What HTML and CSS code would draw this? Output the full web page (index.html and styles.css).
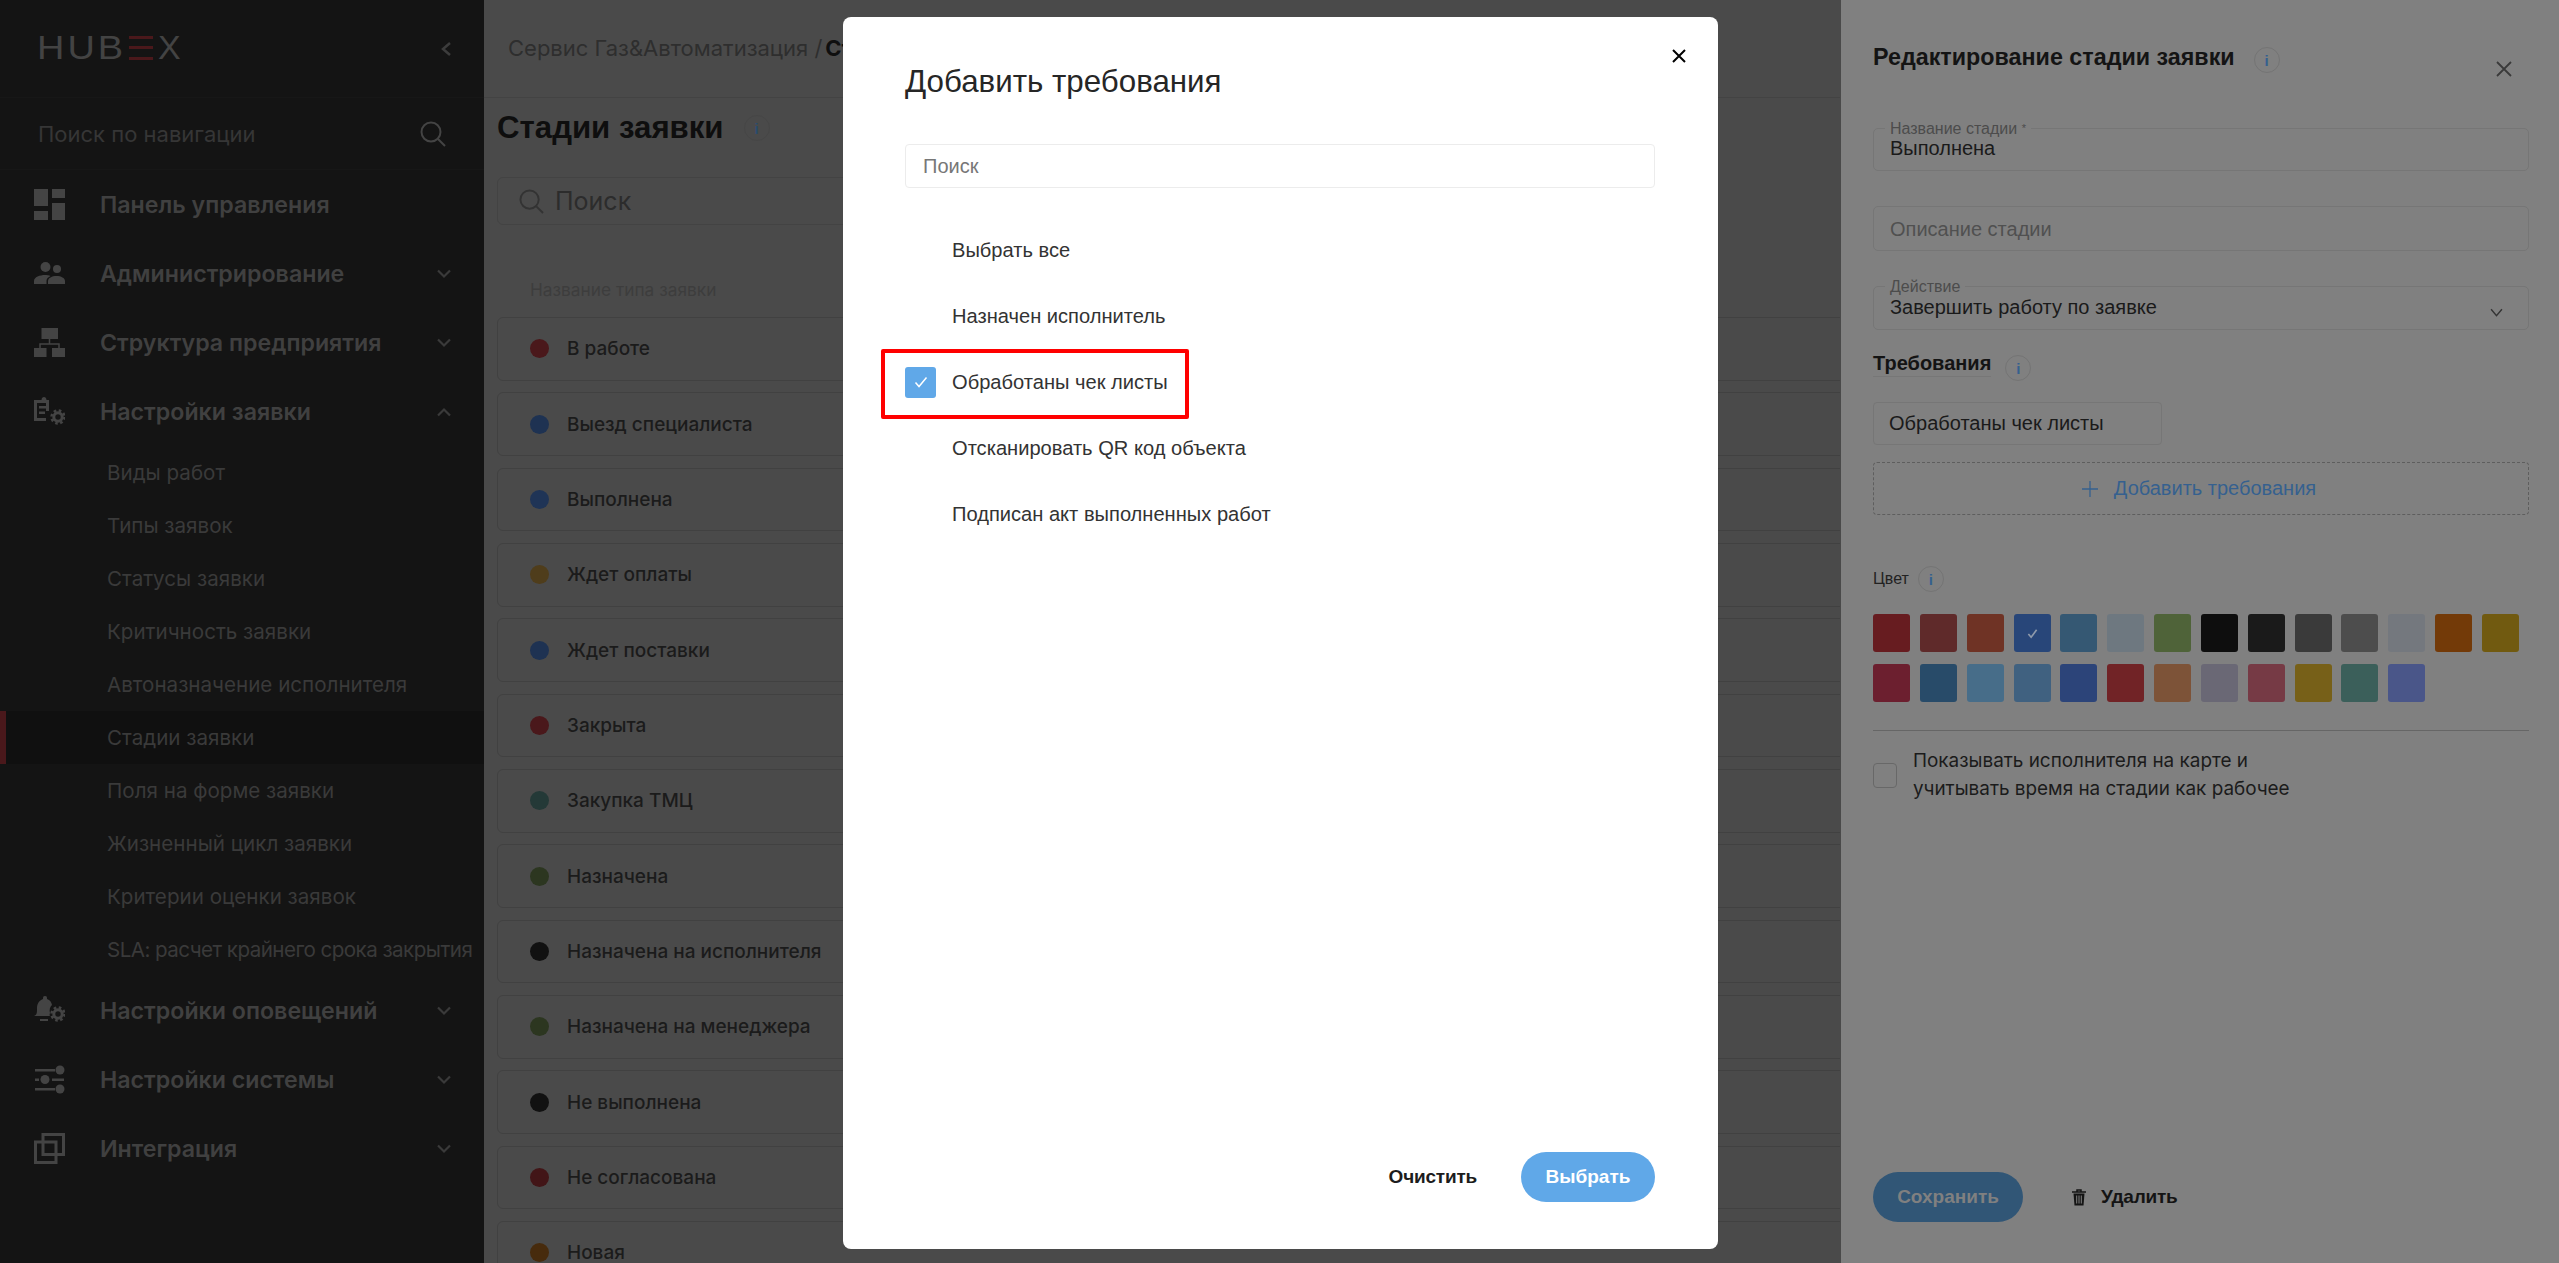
FILE: index.html
```html
<!DOCTYPE html>
<html lang="ru">
<head>
<meta charset="utf-8">
<title>Стадии заявки</title>
<link rel="stylesheet" href="styles.css">
</head>
<body>
<aside class="sidebar">
  <div class="brand">
    <div class="logo"><span class="logo-hub">HUB</span><i class="logo-e"><b></b><b></b><b></b></i><span class="logo-x">X</span></div>
    <svg class="collapse" viewBox="0 0 12 16"><polyline points="10,2 3,8 10,14"/></svg>
  </div>
  <div class="nav-search">
    <span>Поиск по навигации</span>
    <svg class="search-ico" viewBox="0 0 26 26"><circle cx="11" cy="11" r="9.5"/><line x1="18" y1="18" x2="25" y2="25"/></svg>
  </div>
  <nav class="nav">
    <div class="nav-item">
      <svg class="nav-ico" viewBox="0 0 31 31"><rect x="0" y="0" width="14" height="17"/><rect x="18" y="0" width="13" height="9"/><rect x="18" y="14" width="13" height="17"/><rect x="0" y="22" width="14" height="9"/></svg>
      <span>Панель управления</span>
    </div>
    <div class="nav-item">
      <svg class="nav-ico" viewBox="0 0 31 31"><circle cx="11.5" cy="9" r="5"/><circle cx="23" cy="11" r="4"/><path d="M0 26v-3c0-4 6-6 11-6 2 0 4 .4 5.5 1-3 1.5-4 3-4 5v3z"/><path d="M14 26v-3c0-3 4-5 8.5-5s8.5 2 8.5 5v3z"/></svg>
      <span>Администрирование</span>
      <svg class="chev" viewBox="0 0 14 10"><polyline points="1,1.5 7,7.5 13,1.5"/></svg>
    </div>
    <div class="nav-item">
      <svg class="nav-ico" viewBox="0 0 31 31"><rect x="7.5" y="1" width="16.5" height="11"/><rect x="0" y="21" width="12.5" height="9"/><rect x="18" y="21" width="13" height="9"/><path class="wire" d="M15.5 12v5M6 21v-4h19v4"/></svg>
      <span>Структура предприятия</span>
      <svg class="chev" viewBox="0 0 14 10"><polyline points="1,1.5 7,7.5 13,1.5"/></svg>
    </div>
    <div class="nav-item">
      <svg class="nav-ico" viewBox="0 0 31 31"><path d="M5 4h2.5c0-4 5-4 5 0H15v11h-3V7H3v15h9v3H0V4z"/><rect x="5" y="10" width="7" height="2.5"/><rect x="5" y="15.5" width="6" height="2.5"/><circle class="gear" cx="24" cy="21" r="4.2"/><circle class="teeth" cx="24" cy="21" r="6.5"/></svg>
      <span>Настройки заявки</span>
      <svg class="chev" viewBox="0 0 14 10"><polyline points="1,8.5 7,2.5 13,8.5"/></svg>
    </div>
  </nav>
  <div class="sub-nav">
    <div class="sub-item">Виды работ</div>
    <div class="sub-item">Типы заявок</div>
    <div class="sub-item">Статусы заявки</div>
    <div class="sub-item">Критичность заявки</div>
    <div class="sub-item">Автоназначение исполнителя</div>
    <div class="sub-item active">Стадии заявки</div>
    <div class="sub-item">Поля на форме заявки</div>
    <div class="sub-item">Жизненный цикл заявки</div>
    <div class="sub-item">Критерии оценки заявок</div>
    <div class="sub-item sub-tight">SLA: расчет крайнего срока закрытия</div>
  </div>
  <nav class="nav">
    <div class="nav-item">
      <svg class="nav-ico" viewBox="0 0 31 31"><path d="M0 21c3-1 3-3 3-8 0-5 3-8 6-9 0-2 0-3 2-3s2 1 2 3c3 1 4.5 3 5 6-2 1.5-3 5-2 8-.5 1.5-.5 2.5 0 3z"/><rect x="6" y="24" width="8" height="2"/><circle class="gear" cx="24" cy="19" r="4.2"/><circle class="teeth" cx="24" cy="19" r="6.5"/></svg>
      <span>Настройки оповещений</span>
      <svg class="chev" viewBox="0 0 14 10"><polyline points="1,1.5 7,7.5 13,1.5"/></svg>
    </div>
    <div class="nav-item">
      <svg class="nav-ico" viewBox="0 0 31 31"><rect x="1" y="5" width="20" height="2.5"/><circle cx="26" cy="6" r="4.5"/><rect x="1" y="14.5" width="4" height="2.5"/><circle cx="11" cy="15.5" r="4.5"/><rect x="18" y="14.5" width="12" height="2.5"/><rect x="1" y="24" width="20" height="2.5"/><circle cx="26" cy="25" r="4.5"/></svg>
      <span>Настройки системы</span>
      <svg class="chev" viewBox="0 0 14 10"><polyline points="1,1.5 7,7.5 13,1.5"/></svg>
    </div>
    <div class="nav-item">
      <svg class="nav-ico nav-ico-line" viewBox="0 0 31 31"><rect x="9" y="1.5" width="20.5" height="20"/><rect x="1.5" y="9" width="20.5" height="20.5"/></svg>
      <span>Интеграция</span>
      <svg class="chev" viewBox="0 0 14 10"><polyline points="1,1.5 7,7.5 13,1.5"/></svg>
    </div>
  </nav>
</aside>

<main class="main">
  <header class="crumbs"><span>Сервис Газ&amp;Автоматизация /</span><b>Стадии заявки</b></header>
  <div class="page">
    <div class="page-title"><h1>Стадии заявки</h1><span class="info info-main">i</span></div>
    <div class="main-search">
      <svg class="main-search-ico" viewBox="0 0 26 26"><circle cx="11" cy="11" r="9.5"/><line x1="18" y1="18" x2="25" y2="25"/></svg>
      <span>Поиск</span>
    </div>
    <div class="col-head">Название типа заявки</div>
    <div class="rows">
      <div class="row"><i class="dot" style="background:#4a181b"></i>В работе</div>
      <div class="row"><i class="dot" style="background:#1e3252"></i>Выезд специалиста</div>
      <div class="row"><i class="dot" style="background:#1f3456"></i>Выполнена</div>
      <div class="row"><i class="dot" style="background:#4f3d1b"></i>Ждет оплаты</div>
      <div class="row"><i class="dot" style="background:#1e3252"></i>Ждет поставки</div>
      <div class="row"><i class="dot" style="background:#4a181b"></i>Закрыта</div>
      <div class="row"><i class="dot" style="background:#243937"></i>Закупка ТМЦ</div>
      <div class="row"><i class="dot" style="background:#2c3620"></i>Назначена</div>
      <div class="row"><i class="dot" style="background:#111111"></i>Назначена на исполнителя</div>
      <div class="row"><i class="dot" style="background:#2c3620"></i>Назначена на менеджера</div>
      <div class="row"><i class="dot" style="background:#111111"></i>Не выполнена</div>
      <div class="row"><i class="dot" style="background:#421517"></i>Не согласована</div>
      <div class="row"><i class="dot" style="background:#472b0d"></i>Новая</div>
    </div>
  </div>
</main>

<aside class="panel">
  <div class="panel-head">
    <h2>Редактирование стадии заявки</h2>
    <span class="info">i</span>
    <svg class="panel-close" viewBox="0 0 16 16"><path d="M1 1l14 14M15 1L1 15"/></svg>
  </div>
  <div class="field field-name"><label class="float">Название стадии <em>*</em></label><span class="value">Выполнена</span></div>
  <div class="field field-desc"><span class="placeholder">Описание стадии</span></div>
  <div class="field field-action">
    <label class="float">Действие</label><span class="value">Завершить работу по заявке</span>
    <svg class="select-chev" viewBox="0 0 12 8"><polyline points="1,1 6,7 11,1"/></svg>
  </div>
  <div class="req-head"><h3>Требования</h3><span class="info">i</span></div>
  <div class="chip">Обработаны чек листы</div>
  <div class="add-req">
    <svg class="plus" viewBox="0 0 16 16"><path d="M8 0v16M0 8h16"/></svg>
    <span>Добавить требования</span>
  </div>
  <div class="color-head"><span>Цвет</span><span class="info">i</span></div>
  <div class="swatches">
    <i style="background:#671c20"></i><i style="background:#5f2a2a"></i><i style="background:#6f3325"></i>
    <i class="picked" style="background:#284679"><svg viewBox="0 0 12 12"><polyline points="1.5,6.5 4.5,10 10.5,2"/></svg></i>
    <i style="background:#355873"></i><i style="background:#6e7880"></i><i style="background:#4f6339"></i>
    <i style="background:#0e0e0e"></i><i style="background:#1a1a1a"></i><i style="background:#3a3a3a"></i>
    <i style="background:#4d4d4d"></i><i style="background:#74787e"></i><i style="background:#733a08"></i>
    <i style="background:#715a10"></i>
    <i style="background:#6c1f2f"></i><i style="background:#284b69"></i><i style="background:#476d89"></i>
    <i style="background:#406180"></i><i style="background:#2c4479"></i><i style="background:#712326"></i>
    <i style="background:#7d5338"></i><i style="background:#6a6875"></i><i style="background:#763a45"></i>
    <i style="background:#776018"></i><i style="background:#3b5f5a"></i><i style="background:#4a5689"></i>
  </div>
  <hr class="divider">
  <div class="show-on-map">
    <span class="box"></span>
    <p>Показывать исполнителя на карте и<br>учитывать время на стадии как рабочее</p>
  </div>
  <div class="panel-foot">
    <span class="btn-save">Сохранить</span>
    <span class="btn-del">
      <svg class="trash" viewBox="0 0 14 17"><path class="lid" d="M0 3h14M5 3V1h4v2"/><path d="M1.5 4.5h11l-1 12h-9z"/><path class="cut" d="M4.7 6.500v8M7 6.500v8M9.300 6.500v8"/></svg>
      Удалить
    </span>
  </div>
</aside>

<section class="modal">
  <svg class="modal-close" viewBox="0 0 14 14"><path d="M1 1l12 12M13 1L1 13"/></svg>
  <h2 class="modal-title">Добавить требования</h2>
  <div class="modal-search">Поиск</div>
  <ul class="req-list">
    <li>Выбрать все</li>
    <li>Назначен исполнитель</li>
    <li class="checked">
      <span class="check"><svg viewBox="0 0 14 12"><polyline points="1.5,6.5 5,10.5 12.5,1.5"/></svg></span>
      Обработаны чек листы
      <span class="highlight"></span>
    </li>
    <li>Отсканировать QR код объекта</li>
    <li>Подписан акт выполненных работ</li>
  </ul>
  <div class="modal-foot">
    <span class="btn-clear">Очистить</span>
    <span class="btn-pick">Выбрать</span>
  </div>
</section>
</body>
</html>
```

FILE: styles.css
```css
* { box-sizing: border-box; }
html, body { margin: 0; padding: 0; }
body {
  position: relative;
  display: flex;
  width: 2559px;
  height: 1263px;
  overflow: hidden;
  font-family: "Liberation Sans", Arial, sans-serif;
  background: #4a4a4a;
}
h1, h2, h3, p, ul { margin: 0; padding: 0; }

/* sidebar */
.sidebar {
  flex: 0 0 484px;
  height: 100%;
  background: #141414;
  overflow: hidden;
  font-family: Inter, "Noto Sans", sans-serif;
}
.brand {
  height: 98px;
  padding: 0 32px 0 37px;
  display: flex;
  align-items: center;
  justify-content: space-between;
  border-bottom: 1px solid #171717;
}
.logo {
  display: flex;
  align-items: center;
  margin-top: -2px;
  font: 400 33px/1 "Liberation Sans", sans-serif;
  color: #434343;
}
.logo-hub { display: inline-block; width: 92px; letter-spacing: 2.6px; transform: scaleX(1.15); transform-origin: left center; }
.logo-x { display: inline-block; margin-left: 5px; transform: scaleX(1.03); transform-origin: left center; }
.logo-e { display: flex; flex-direction: column; justify-content: space-between; width: 24px; height: 24px; }
.logo-e b { display: block; height: 3px; background: #4a181b; }
.collapse { width: 12px; height: 16px; fill: none; stroke: #3c3c3c; stroke-width: 2.5; }
.nav-search {
  height: 72px;
  padding: 0 38px;
  display: flex;
  align-items: center;
  justify-content: space-between;
  border-bottom: 1px solid #171717;
  font-size: 22px;
  color: #363636;
}
.search-ico { width: 26px; height: 26px; fill: none; stroke: #444; stroke-width: 2; }
.nav-item {
  height: 69px;
  padding: 0 33px 0 34px;
  display: flex;
  align-items: center;
  font-size: 23.2px;
  font-weight: 600;
  color: #404040;
}
.nav-item span { flex: 1; margin-left: 35px; white-space: nowrap; }
.nav-ico { flex: 0 0 31px; width: 31px; height: 31px; fill: #444; }
.nav-ico .wire { fill: none; stroke: #444; stroke-width: 1.5; }
.nav-ico .gear { fill: none; stroke: #444; stroke-width: 3; }
.nav-ico .teeth { fill: none; stroke: #444; stroke-width: 2.5; stroke-dasharray: 2.6 2.5; }
.nav-ico-line { fill: none; stroke: #444; stroke-width: 3; }
.chev { flex: 0 0 14px; width: 14px; height: 10px; fill: none; stroke: #3a3a3a; stroke-width: 2.2; }
.sub-item {
  height: 53px;
  padding-left: 107px;
  display: flex;
  align-items: center;
  font-size: 20.6px;
  color: #3a3a3a;
  white-space: nowrap;
}
.sub-item.active { background: #101010; border-left: 6px solid #4a181b; padding-left: 101px; }
.sub-tight { letter-spacing: -0.55px; }

/* main */
.main {
  flex: 0 0 1356px;
  height: 100%;
  overflow: hidden;
  background: #4a4a4a;
}
.crumbs {
  height: 98px;
  padding: 0 0 2px 24px;
  display: flex;
  align-items: center;
  gap: 3px;
  border-bottom: 1px solid #434343;
  font-family: Inter, "Noto Sans", sans-serif;
  font-size: 22px;
  color: #2e2e2e;
}
.crumbs b { color: #0f0f0f; }
.page { padding: 0 0 0 13px; }
.page-title { display: flex; align-items: center; height: 60px; }
.page-title h1 { font-size: 31.2px; font-weight: 700; color: #0e0e0e; white-space: nowrap; }
.info {
  flex: 0 0 26px;
  width: 26px;
  height: 26px;
  display: flex;
  align-items: center;
  justify-content: center;
  border: 1px solid #747474;
  border-radius: 50%;
  font: 700 15px/1 "Liberation Sans", sans-serif;
  color: #35608f;
}
.info-main { margin-left: 20px; border-color: #464646; color: #2a4c6e; }
.main-search {
  height: 48px;
  margin-top: 19px;
  width: 1200px;
  padding-left: 21px;
  display: flex;
  align-items: center;
  gap: 11px;
  border: 1px solid #434343;
  border-radius: 6px;
  font-family: Inter, "Noto Sans", sans-serif;
  font-size: 25px;
  color: #2c2c2c;
}
.main-search-ico { width: 25px; height: 25px; fill: none; stroke: #333; stroke-width: 2; }
.col-head {
  height: 28px;
  margin-top: 50px;
  padding-left: 33px;
  display: flex;
  align-items: center;
  font-family: Inter, "Noto Sans", sans-serif;
  font-size: 17.3px;
  color: #3d3d3d;
}
.rows { display: flex; flex-direction: column; gap: 11.85px; margin-top: 14px; width: 1400px; }
.row {
  flex: 0 0 63.5px;
  padding-left: 32px;
  display: flex;
  align-items: center;
  border: 1px solid #414141;
  border-radius: 6px;
  font-family: Inter, "Noto Sans", sans-serif;
  font-size: 19px;
  font-weight: 500;
  color: #1b1b1b;
}
.dot { flex: 0 0 19px; height: 19px; margin-right: 18px; border-radius: 50%; }

/* right panel */
.panel {
  flex: 0 0 719px;
  height: 100%;
  padding: 0 30px 41px 32px;
  display: flex;
  flex-direction: column;
  background: #808080;
  border-left: 1px solid #4a4a4a;
  color: #161616;
}
.panel-head { height: 128px; padding-top: 44px; display: flex; align-items: flex-start; }
.panel-head h2 { font-size: 23.3px; line-height: 26px; font-weight: 700; color: #141414; white-space: nowrap; }
.panel-head .info { margin: 3px 0 0 19px; }
.panel-close { width: 16px; height: 16px; margin: 17px 17px 0 auto; fill: none; stroke: #3a3a3a; stroke-width: 1.8; }
.field {
  position: relative;
  padding: 0 16px;
  display: flex;
  align-items: center;
  border: 1px solid #767676;
  border-radius: 5px;
  font-size: 20px;
}
.field-name { height: 43px; }
.field-desc { height: 45px; margin-top: 35px; }
.field-action { height: 44px; margin-top: 35px; justify-content: space-between; }
.value { margin-top: -2px; color: #1a1a1a; }
.placeholder { margin-top: 1px; color: #505050; }
.float {
  position: absolute;
  left: 11px;
  top: -9px;
  padding: 0 5px;
  background: #808080;
  font-size: 16px;
  line-height: 17px;
  color: #4c4c4c;
}
.float em { font-style: normal; font-size: 11px; vertical-align: top; }
.select-chev { width: 13px; height: 9px; margin: 9px 9px 0 0; fill: none; stroke: #333; stroke-width: 1.3; }
.req-head { display: flex; height: 26px; margin-top: 21px; }
.req-head h3 { height: 26px; font-size: 20px; line-height: 25px; font-weight: 700; color: #141414; border-bottom: 1px solid #777; }
.req-head .info { margin: 4px 0 0 14px; }
.chip {
  width: 289px;
  height: 43px;
  margin-top: 25px;
  padding-left: 15px;
  display: flex;
  align-items: center;
  border: 1px solid #767676;
  border-radius: 4px;
  font-size: 20px;
  color: #1a1a1a;
}
.add-req {
  height: 53px;
  margin-top: 17px;
  display: flex;
  align-items: center;
  justify-content: center;
  gap: 16px;
  padding-right: 4px;
  border: 1px dashed #5e5e5e;
  border-radius: 4px;
  font-size: 20px;
  color: #35608f;
}
.plus { width: 16px; height: 16px; fill: none; stroke: #35608f; stroke-width: 1.3; }
.color-head { display: flex; align-items: center; gap: 9px; height: 26px; margin-top: 51px; font-size: 16px; color: #222; }
.swatches { display: grid; grid-template-columns: repeat(14, 37px); column-gap: 9.85px; row-gap: 12px; margin-top: 22px; }
.swatches i { display: flex; align-items: center; justify-content: center; height: 38px; border-radius: 3px; }
.swatches svg { width: 11px; height: 11px; fill: none; stroke: #8f9aab; stroke-width: 1.8; }
.divider { width: 100%; height: 1px; margin: 28px 0 0; border: 0; background: #666; }
.show-on-map { display: flex; align-items: center; margin-top: 16px; }
.box { flex: 0 0 24px; height: 25px; margin-right: 16px; border: 1px solid #686868; border-radius: 4px; }
.show-on-map p { font-family: Inter, "Noto Sans", sans-serif; font-size: 18.9px; line-height: 28px; color: #1b1b1b; white-space: nowrap; }
.panel-foot { margin-top: auto; display: flex; align-items: center; }
.btn-save {
  width: 150px;
  height: 50px;
  display: flex;
  align-items: center;
  justify-content: center;
  border-radius: 25px;
  background: #315676;
  font-size: 19px;
  font-weight: 700;
  color: #808080;
}
.btn-del { display: flex; align-items: center; gap: 15px; margin-left: 49px; font-size: 19px; font-weight: 700; color: #141414; letter-spacing: -0.2px; }
.trash { width: 14px; height: 17px; fill: #141414; }
.trash .lid { fill: none; stroke: #141414; stroke-width: 1.5; }
.trash .cut { fill: none; stroke: #808080; stroke-width: 1; }

/* modal */
.modal {
  position: absolute;
  left: 843px;
  top: 17px;
  width: 875px;
  height: 1232px;
  padding: 47px 63px 47px 62px;
  display: flex;
  flex-direction: column;
  background: #fff;
  border-radius: 8px;
}
.modal-close { position: absolute; top: 32px; right: 32px; width: 14px; height: 14px; fill: none; stroke: #000; stroke-width: 2; }
.modal-title { font-size: 31.3px; line-height: 36px; font-weight: 400; color: #262626; }
.modal-search {
  height: 44px;
  margin-top: 44px;
  padding-left: 17px;
  display: flex;
  align-items: center;
  border: 1px solid #ececec;
  border-radius: 4px;
  font-size: 20px;
  color: #777;
}
.req-list { list-style: none; margin-top: 29px; }
.req-list li {
  position: relative;
  height: 66px;
  padding-left: 47px;
  display: flex;
  align-items: center;
  font-size: 20.1px;
  color: #333;
}
.req-list .checked { padding-left: 0; }
.check {
  flex: 0 0 31px;
  height: 31px;
  margin-right: 16px;
  display: flex;
  align-items: center;
  justify-content: center;
  background: #60a8e8;
  border-radius: 3px;
}
.check svg { width: 14px; height: 12px; fill: none; stroke: #fff; stroke-width: 1.5; }
.highlight {
  position: absolute;
  left: -24px;
  top: 0;
  width: 308px;
  height: 70px;
  border: 4px solid #f00;
  border-radius: 2px;
}
.modal-foot { margin-top: auto; display: flex; align-items: center; justify-content: flex-end; }
.btn-clear { margin-right: 44px; font-size: 19px; font-weight: 700; color: #1c1c1c; letter-spacing: -0.2px; }
.btn-pick {
  width: 134px;
  height: 50px;
  display: flex;
  align-items: center;
  justify-content: center;
  border-radius: 25px;
  background: #60a8e8;
  font-size: 19px;
  font-weight: 700;
  color: #fff;
}
```
